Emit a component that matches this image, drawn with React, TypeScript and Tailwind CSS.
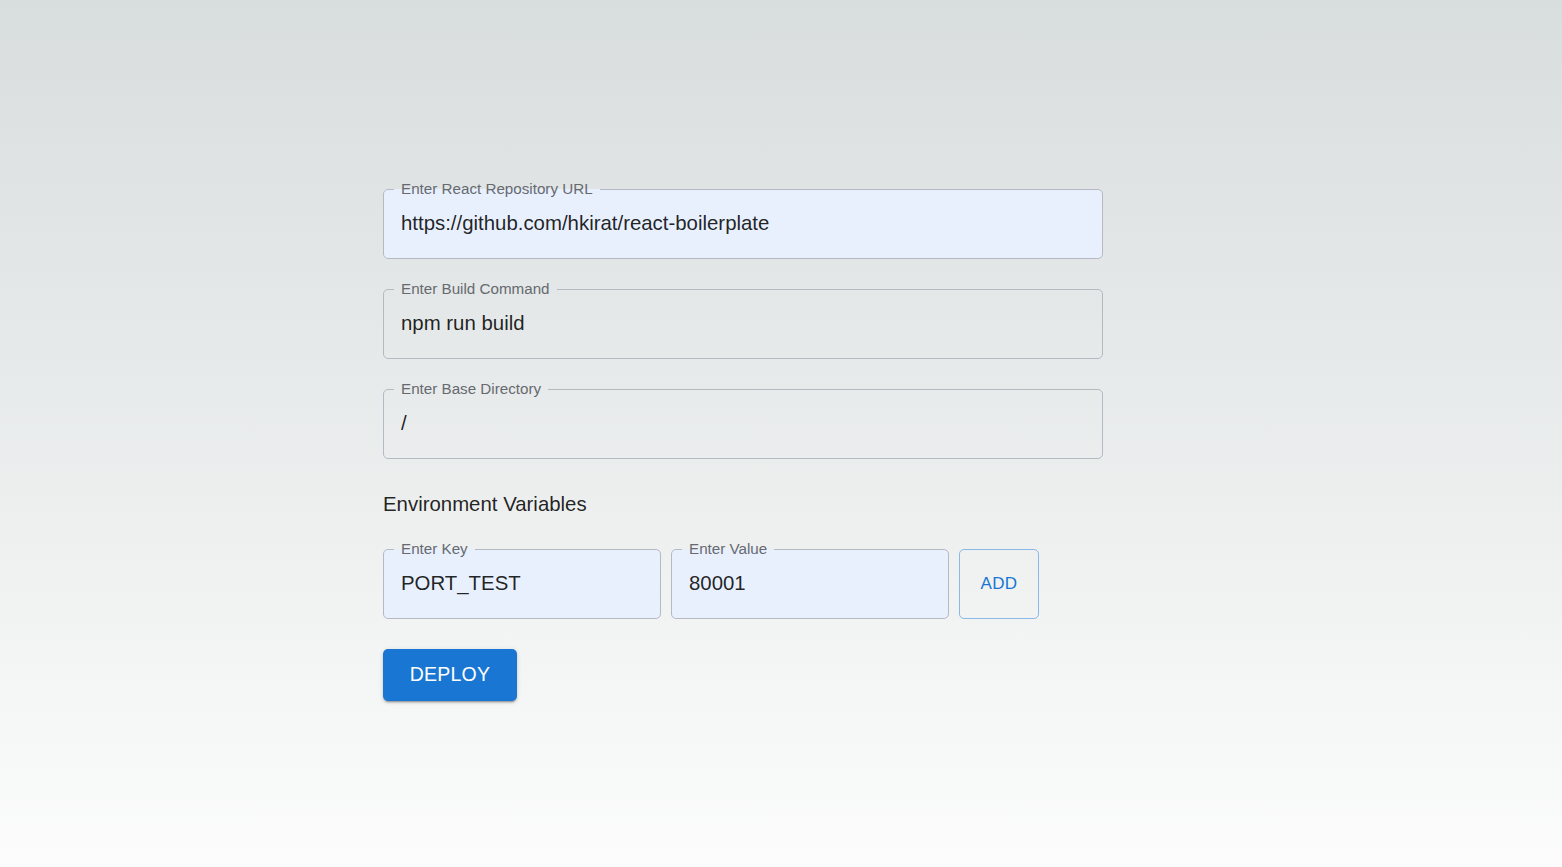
import React from "react";

const FONT = "'Liberation Sans', Arial, sans-serif";

function Field({
  label,
  value,
  filled,
  className,
}: {
  label: string;
  value: string;
  filled?: boolean;
  className?: string;
}) {
  return (
    <div className={"relative h-[70px] " + (className ?? "")}>
      <input
        readOnly
        value={value}
        className={
          "h-full w-full rounded-[5px] px-[18px] pb-[2px] text-[20.4px] text-[rgba(0,0,0,0.87)] outline-none " +
          (filled ? "bg-[#e8f0fe]" : "bg-transparent")
        }
        style={{ fontFamily: FONT }}
      />
      <fieldset className="pointer-events-none absolute inset-x-0 bottom-0 top-[-9px] m-0 rounded-[5px] border border-[#b4b9c2] px-[10px]">
        <legend className="px-[7px] text-[15.2px] leading-[18px] text-[#666a70]">
          {label}
        </legend>
      </fieldset>
    </div>
  );
}

export default function App() {
  return (
    <div
      className="min-h-[867px] w-full bg-gradient-to-b from-[#d8dddd] to-[#fcfcfc] pl-[383px] pt-[189px]"
      style={{ fontFamily: FONT }}
    >
      <div className="flex w-[720px] flex-col">
        <Field
          label="Enter React Repository URL"
          value="https://github.com/hkirat/react-boilerplate"
          filled
        />
        <Field label="Enter Build Command" value="npm run build" className="mt-[30px]" />
        <Field label="Enter Base Directory" value="/" className="mt-[30px]" />
        <div className="mt-[33px] text-[20.4px] leading-[24px] text-[rgba(0,0,0,0.87)]">
          Environment Variables
        </div>
        <div className="mt-[33px] flex gap-[10px]">
          <Field label="Enter Key" value="PORT_TEST" filled className="w-[278px]" />
          <Field label="Enter Value" value="80001" filled className="w-[278px]" />
          <button className="h-[70px] w-[80px] rounded-[5px] border border-[#8ab8e8] text-[17px] tracking-[0.4px] text-[#1976d2]">
            ADD
          </button>
        </div>
        <div className="mt-[30px]">
          <button className="h-[52px] w-[134px] rounded-[5px] bg-[#1976d2] text-[19.5px] tracking-[0.2px] text-white shadow-[0_3px_1px_-2px_rgba(0,0,0,0.2),0_2px_2px_0_rgba(0,0,0,0.14),0_1px_5px_0_rgba(0,0,0,0.12)]">
            DEPLOY
          </button>
        </div>
      </div>
    </div>
  );
}
